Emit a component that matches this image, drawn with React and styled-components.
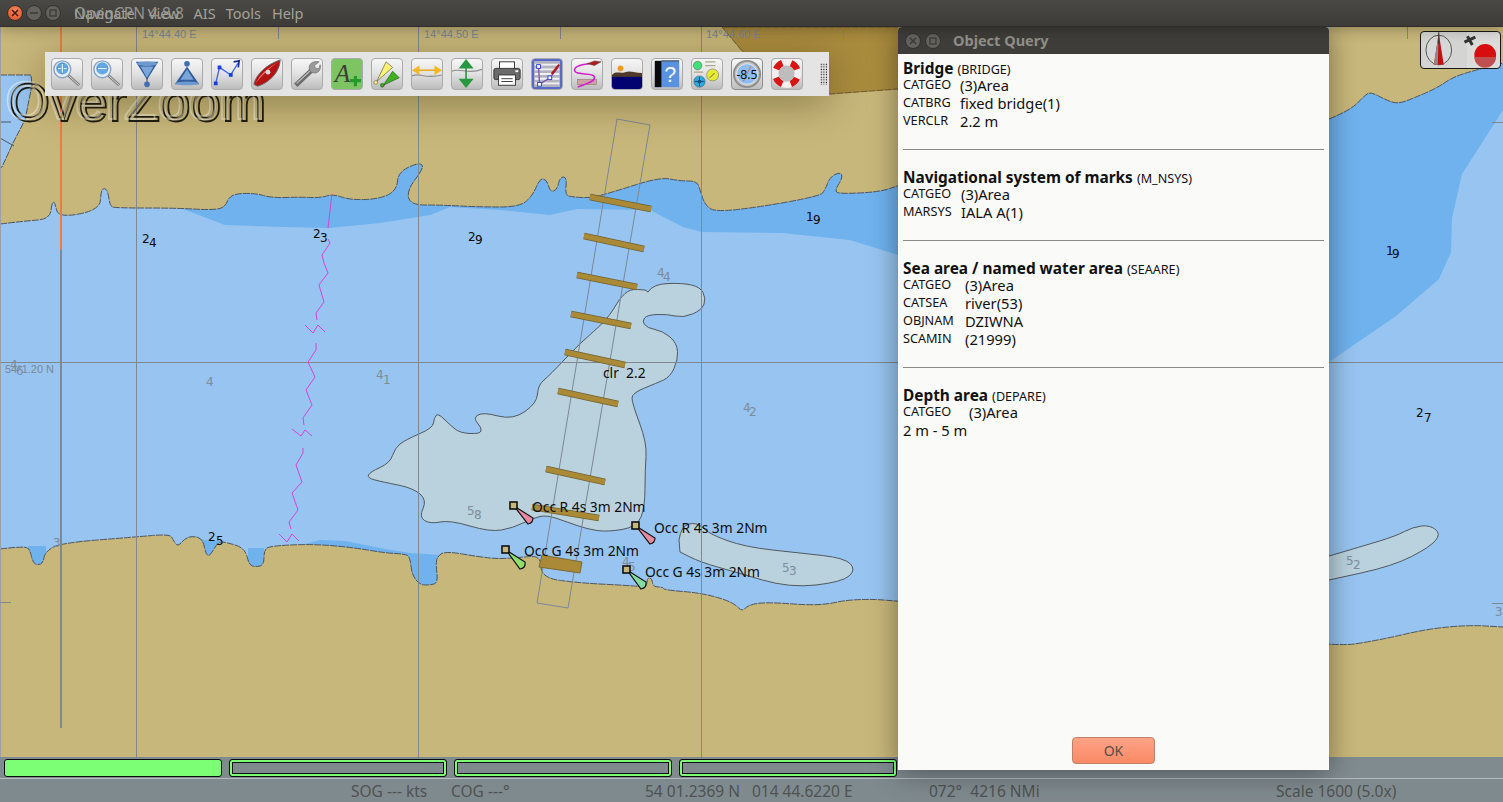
import React from "react";
import styled, { createGlobalStyle } from "styled-components";

const GlobalStyle = createGlobalStyle`
  html, body { margin: 0; padding: 0; background: #3c3b37; }
  body { font-family: "Noto Sans", "Open Sans", sans-serif; overflow: hidden; }
`;

const AppWindow = styled.div`
  position: relative;
  display: flex;
  flex-direction: column;
  width: 1503px;
  height: 802px;
  overflow: hidden;
`;

const TitleBar = styled.div`
  position: relative;
  display: flex;
  align-items: center;
  height: 27px;
  flex: none;
  padding-left: 7px;
  background: linear-gradient(#4b4945, #3c3b37);
  border-bottom: 1px solid #2f2e2b;
  box-sizing: border-box;
  box-shadow: 0 2px 14px rgba(0, 0, 0, 0.3);
  z-index: 3;
`;

const WinButtons = styled.div`
  display: flex;
  gap: 3px;
  margin-right: 13px;
`;

const WinButton = styled.div`
  display: flex;
  align-items: center;
  justify-content: center;
  width: ${(p) => p.$size || 16}px;
  height: ${(p) => p.$size || 16}px;
  border-radius: 50%;
  background: ${(p) => (p.$close ? "radial-gradient(circle at 50% 35%, #f58a5f, #e0491f)" : "#63625d")};
  border: 1px solid #33322e;
  box-sizing: border-box;
  color: ${(p) => (p.$close ? "#4a1c0c" : "#3d3c38")};
`;

const TitleMenus = styled.div`
  position: relative;
  display: flex;
  align-items: center;
  font-size: 14.5px;
  color: #a3a29b;
`;

const MenuItem = styled.span`
  margin-right: ${(p) => p.$gap || 10}px;
`;

const WindowTitle = styled.span`
  position: absolute;
  left: 0;
  top: 0;
  font-size: 15.5px;
  line-height: 20px;
  color: #a3a29b;
  opacity: 0.85;
  white-space: nowrap;
`;

const ChartArea = styled.div`
  position: relative;
  flex: 1;
  min-height: 0;
  background: #97c4f0;
`;

const ChartSvg = styled.svg`
  display: block;
  width: 100%;
  height: 100%;
`;

const Sounding = styled.text`
  font-family: "DejaVu Sans", sans-serif;
  font-size: 12px;
  fill: ${(p) => (p.$dim ? "#7e8b9c" : "#0a0a0a")};
`;

const GridLabel = styled.text`
  font-family: "Liberation Sans", sans-serif;
  font-size: 11px;
  fill: #7d8896;
`;

const LightLabel = styled.text`
  font-family: "Noto Sans", sans-serif;
  font-size: 13.8px;
  fill: #0d0d0d;
`;

const WaterMark = styled.text`
  font-family: "Liberation Sans", sans-serif;
  font-size: 53px;
  letter-spacing: 1px;
  fill: none;
  stroke: ${(p) => p.$color};
  stroke-width: ${(p) => p.$width};
`;

const Toolbar = styled.div`
  position: absolute;
  left: 45px;
  top: 25px;
  display: flex;
  align-items: center;
  gap: 8px;
  height: 44px;
  padding: 0 2px 0 6px;
  background: #e4e4e4;
  box-shadow: 0 8px 38px rgba(40, 30, 0, 0.36);
`;

const ToolButton = styled.div`
  width: 32px;
  height: 32px;
  flex: none;
  box-sizing: border-box;
  border: 1.5px solid ${(p) => (p.$dark ? "#8e8e8e" : "#aaa")};
  border-radius: 4px;
  overflow: hidden;
  background: ${(p) => (p.$active ? "#7cc562" : "linear-gradient(#f6f6f6 0%, #e4e4e4 45%, #bdbdbd 100%)")};

  svg {
    display: block;
    width: 100%;
    height: 100%;
  }
`;

const Grip = styled.div`
  width: 7px;
  height: 22px;
  margin-left: 9px;
  background-image: radial-gradient(#111 0.7px, transparent 0.9px);
  background-size: 2.6px 2.6px;
`;

const CompassBox = styled.div`
  position: absolute;
  left: 1420px;
  top: 4px;
  display: flex;
  width: 81px;
  height: 38px;
  box-sizing: border-box;
  border: 1.5px solid #1a1a1a;
  border-radius: 4px;
  background: linear-gradient(90deg, #d4d4d2 0 58%, #dcdcda 58%);
  overflow: hidden;

  svg {
    width: 100%;
    height: 100%;
  }
`;

const ChartBar = styled.div`
  display: flex;
  flex: none;
  gap: 7px;
  height: 22px;
  box-sizing: border-box;
  padding: 2px 0 0 4px;
  background: #808b90;
  border-bottom: 1px solid #b6bcbe;
`;

const ChartSlot = styled.div`
  width: 218px;
  height: 18px;
  box-sizing: border-box;
  border: 1px solid #0c0c0c;
  border-radius: 3px;
  background: ${(p) => (p.$on ? "#7dff75" : "#808b90")};
  box-shadow: ${(p) => (p.$on ? "none" : "inset 0 0 0 2px #7dff75, inset 0 0 0 3px #101010")};
`;

const StatusBar = styled.div`
  display: grid;
  grid-template-columns: 100px 194px 284px 347px 1fr;
  align-items: center;
  flex: none;
  height: 23px;
  padding-left: 351px;
  background: #7f8a8e;
  color: #4f5252;
  font-size: 15.5px;
`;

const StatusField = styled.div`
  white-space: pre;
`;

const PosFields = styled.div`
  display: flex;
  gap: 12px;
`;

const QueryDialog = styled.div`
  position: absolute;
  left: 898px;
  top: 27px;
  display: flex;
  flex-direction: column;
  width: 431px;
  height: 743px;
  border-radius: 4px 4px 0 0;
  overflow: hidden;
  background: #fafaf8;
  z-index: 2;
`;

const DialogShadow = styled.div`
  position: absolute;
  left: 898px;
  top: 27px;
  width: 431px;
  height: 743px;
  box-shadow: 0 2px 26px rgba(0, 0, 0, 0.42);
  z-index: 1;
`;

const DialogTitle = styled.div`
  display: flex;
  align-items: center;
  flex: none;
  gap: 4px;
  height: 27px;
  padding-left: 7px;
  background: #3f3d39;
`;

const DialogTitleText = styled.span`
  margin-left: 8px;
  margin-top: -2px;
  font-size: 14.5px;
  font-weight: 700;
  color: #8f8e87;
`;

const DialogBody = styled.div`
  flex: 1;
  display: flex;
  flex-direction: column;
  padding: 5px 5px 6px;
  color: #111;
`;

const SectionHead = styled.div`
  height: 18px;
  line-height: 20px;
  font-size: 15.4px;
  font-weight: 700;
  white-space: nowrap;
`;

const SectionCode = styled.span`
  font-size: 12.6px;
  font-weight: 400;
`;

const AttrRow = styled.div`
  display: grid;
  grid-template-columns: ${(p) => p.$key}px 1fr;
  height: 18px;
  line-height: 16px;
  font-size: 14.7px;
`;

const AttrKey = styled.span`
  font-size: 12.7px;
  line-height: 14px;
`;

const Divider = styled.div`
  height: 1px;
  margin: 18px 0;
  background: #8a8a88;
`;

const DialogFooter = styled.div`
  margin-top: auto;
  display: flex;
  justify-content: center;
`;

const OkButton = styled.button`
  width: 83px;
  height: 27px;
  padding: 0;
  border: 1px solid #c27f69;
  border-radius: 4px;
  background: linear-gradient(#fea386, #f98a66);
  color: #53504e;
  font-family: inherit;
  font-size: 14px;
`;

const smooth = (pts, close) => {
  const mid = (a, b) => [(a[0] + b[0]) / 2, (a[1] + b[1]) / 2];
  let d = `M${pts[0][0]} ${pts[0][1]}`;
  for (let i = 1; i < pts.length - 1; i++) {
    const m = mid(pts[i], pts[i + 1]);
    d += ` Q${pts[i][0]} ${pts[i][1]} ${m[0]} ${m[1]}`;
  }
  const last = pts[pts.length - 1];
  d += ` L${last[0]} ${last[1]}`;
  return close ? d + " Z" : d;
};

const line = (pts) => pts.map((p) => p.join(",")).join(" ");

const topCoastLeft = [[0, 224], [25, 221], [50, 219], [52, 202], [55, 202], [58, 218], [100, 210], [101, 190], [105, 188], [108, 192], [110, 206], [115, 208], [175, 208], [210, 210], [225, 208], [230, 194], [255, 193], [272, 198], [300, 197], [320, 198], [333, 194], [350, 200], [380, 199], [397, 190], [398, 172], [420, 162], [424, 168], [407, 190], [410, 205], [440, 205], [480, 207], [520, 207], [533, 195], [540, 178], [547, 180], [550, 192], [557, 190], [560, 177], [567, 177], [565, 195], [572, 197], [590, 198], [610, 193], [660, 177], [680, 181], [697, 181], [700, 190], [705, 205], [715, 212], [760, 207], [820, 196], [825, 190], [830, 177], [840, 172], [843, 177], [835, 190], [838, 194], [880, 192], [900, 185]];
const topCoastRight = [[1329, 119], [1351, 110], [1365, 95], [1371, 92], [1386, 100], [1398, 104], [1414, 98], [1437, 88], [1453, 77], [1476, 70], [1503, 63]];
const bottomCoast = [[0, 549], [25, 546], [30, 550], [33, 563], [38, 565], [43, 563], [45, 552], [60, 543], [135, 537], [170, 534], [173, 540], [178, 547], [185, 538], [195, 536], [203, 540], [206, 555], [210, 556], [218, 542], [225, 542], [245, 548], [249, 565], [256, 567], [264, 565], [264, 550], [270, 546], [310, 544], [350, 547], [385, 553], [405, 554], [410, 557], [412, 575], [420, 585], [430, 585], [438, 583], [436, 565], [437, 557], [445, 551], [480, 557], [500, 559], [523, 557], [541, 556], [541, 578], [580, 583], [620, 585], [647, 587], [647, 578], [652, 578], [653, 587], [663, 587], [664, 590], [702, 593], [733, 602], [742, 612], [748, 605], [767, 602], [820, 606], [850, 599], [898, 600], [1329, 648], [1380, 640], [1427, 629], [1469, 625], [1503, 627]];
const mediumBand = [[183, 209], [225, 225], [285, 227], [329, 228], [380, 223], [430, 215], [450, 207], [500, 210], [550, 215], [577, 209], [650, 210], [683, 227], [702, 232], [783, 233], [850, 240], [898, 255], [1329, 362], [1396, 316], [1439, 279], [1451, 252], [1452, 218], [1462, 174], [1503, 110], [1503, 27], [183, 27]];
const darkLand = [[722, 27], [743, 52], [830, 94], [898, 89], [910, 27]];
const bigIsland = [[648, 292], [653, 284], [683, 283], [700, 287], [706, 298], [702, 310], [683, 318], [667, 314], [647, 315], [642, 321], [647, 328], [663, 331], [677, 343], [678, 360], [670, 377], [657, 383], [632, 393], [632, 403], [647, 443], [645, 470], [645, 507], [637, 527], [607, 532], [587, 529], [567, 522], [547, 515], [533, 518], [513, 528], [490, 532], [450, 520], [430, 524], [419, 517], [427, 500], [413, 488], [383, 482], [367, 478], [370, 472], [390, 463], [395, 448], [405, 440], [433, 428], [434, 418], [438, 413], [450, 425], [460, 433], [480, 434], [482, 428], [473, 418], [483, 412], [513, 420], [537, 403], [538, 385], [550, 375], [580, 343], [607, 320], [620, 298], [630, 289], [645, 290]];
const midIsland = [[679, 540], [681, 526], [697, 522], [709, 534], [745, 547], [800, 553], [845, 558], [856, 570], [842, 582], [790, 588], [735, 572], [700, 562], [680, 552]];
const rightIsland = [[1329, 556], [1363, 546], [1396, 536], [1413, 527], [1430, 525], [1441, 534], [1430, 547], [1393, 566], [1329, 580]];
const bridgeBars = [[590, 197, 651, 209], [584, 236, 644, 249], [577, 275, 637, 287], [571, 314, 631, 326], [565, 352, 625, 365], [558, 391, 618, 404], [546, 469, 605, 482], [532, 507, 599, 518]];
const cableA = [[328, 239], [330, 243], [322, 255], [324, 263], [328, 273], [319, 285], [324, 302], [316, 313], [317, 320]];
const cableB = [[316, 343], [316, 350], [308, 362], [315, 377], [306, 390], [312, 405], [303, 418], [304, 425]];
const cableC = [[303, 448], [303, 453], [296, 465], [302, 482], [292, 493], [298, 510], [289, 522], [291, 529]];
const chevrons = [[[305, 325], [313, 333], [318, 325], [325, 332]], [[292, 429], [301, 436], [305, 430], [312, 436]], [[279, 534], [287, 542], [292, 534], [299, 541]]];
const soundings = [
  ["2", 142, 243], ["4", 149, 247], ["2", 313, 238], ["3", 320, 242], ["2", 468, 241], ["9", 475, 244],
  ["1", 806, 221], ["9", 813, 224], ["1", 1386, 255], ["9", 1392, 258], ["2", 1416, 417], ["7", 1424, 422],
  ["2", 208, 541], ["5", 216, 545],
];
const dimSoundings = [
  ["4", 206, 386], ["4", 376, 379], ["1", 383, 384], ["4", 743, 412], ["2", 749, 416], ["4", 657, 277], ["4", 663, 281],
  ["5", 467, 515], ["8", 474, 519], ["5", 782, 572], ["3", 789, 575], ["5", 1346, 565], ["2", 1353, 569],
  ["3", 1495, 616], ["3", 53, 547], ["4", 622, 566], ["5", 628, 571], ["4", 10, 369], ["6", 16, 375],
];
const lights = [
  { x: 513, y: 505, fill: "#e58aa0", d: "M1 1 L20 13 Q20 18 15 19 Z", label: "Occ R 4s 3m 2Nm", lx: 532, ly: 512 },
  { x: 635, y: 525, fill: "#e58aa0", d: "M1 1 L20 13 Q20 18 15 19 Z", label: "Occ R 4s 3m 2Nm", lx: 654, ly: 533 },
  { x: 505, y: 549, fill: "#8fdf70", d: "M1 1 L20 13 Q21 19 15 20 Z", label: "Occ G 4s 3m 2Nm", lx: 524, ly: 556 },
  { x: 626, y: 569, fill: "#85dca0", d: "M1 1 L20 13 Q21 19 15 20 Z", label: "Occ G 4s 3m 2Nm", lx: 645, ly: 577 },
];

function ChartMap() {
  return (
    <ChartSvg viewBox="0 27 1503 730">
      <polygon points={line(mediumBand)} fill="#6fb2ee" />
      <polygon points="28,546 46,546 46,575 28,575" fill="#6fb2ee" />
      <polygon points="175,546 190,536 205,540 220,541 218,562 200,562" fill="#6fb2ee" />
      <polygon points="248,548 264,548 264,572 248,572" fill="#6fb2ee" />
      <polygon points="305,544 320,540 345,541 385,549 410,553 440,555 440,592 410,592 400,560 305,550" fill="#6fb2ee" />

      <path d={`${smooth(topCoastLeft)} L900 27 L0 27 Z`} fill="#c8b77a" />
      <path d={`${smooth(topCoastRight)} L1503 27 L1329 27 Z`} fill="#c8b77a" />
      <polygon points={line(darkLand)} fill="#aa8c3e" stroke="#6d5a28" strokeDasharray="7 1" />
      <path d={smooth(topCoastLeft)} fill="none" stroke="#4e5560" strokeWidth="1" strokeDasharray="7 1" />
      <path d={smooth(topCoastRight)} fill="none" stroke="#4e5560" strokeWidth="1" strokeDasharray="7 1" />

      <path d={`${smooth(bottomCoast)} L1503 757 L0 757 Z`} fill="#c8b77a" />
      <path d={smooth(bottomCoast)} fill="none" stroke="#4e5560" strokeWidth="1" strokeDasharray="7 1" />

      <polygon points="0,75 31,75 32,85 25,120 13,143 2,167 0,168" fill="#97c4f0" stroke="#4e5560" strokeDasharray="7 1" />
      <path d="M0 138 L14 146 M0 122 L11 122" stroke="#4e5560" />

      <path d={smooth(bigIsland, true)} fill="#b9d2de" stroke="#52585e" />
      <path d={smooth(midIsland, true)} fill="#b9d2de" stroke="#52585e" />
      <path d={smooth(rightIsland)} fill="#b9d2de" stroke="#52585e" />

      {[136, 418, 701].map((x) => (
        <line key={x} x1={x + 0.5} y1="27" x2={x + 0.5} y2="757" stroke="#808890" />
      ))}
      {[278, 560, 843, 1407].map((x) => (
        <line key={x} x1={x + 0.5} y1="27" x2={x + 0.5} y2="39" stroke="#808890" />
      ))}
      <line x1="0" y1="362.5" x2="1503" y2="362.5" stroke="#808890" />
      <line x1="0.5" y1="27" x2="0.5" y2="757" stroke="#9aa0a6" />
      <line x1="61" y1="250" x2="61" y2="728" stroke="#808890" strokeWidth="2" />
      <line x1="61" y1="27" x2="61" y2="250" stroke="#ec7d3f" strokeWidth="2" />
      <path d="M0 602.5 H11 M1492 122.5 H1503 M1492 603.5 H1503" stroke="#808890" />

      <GridLabel x="142" y="38">14°44.40 E</GridLabel>
      <GridLabel x="424" y="38">14°44.50 E</GridLabel>
      <GridLabel x="706" y="38">14°44.60 E</GridLabel>
      <GridLabel x="5" y="373">54°1.20 N</GridLabel>

      <polygon points="617,119 650,125 568,608 537,603" fill="none" stroke="#7c8896" />
      {bridgeBars.map((b) => (
        <g key={b[0]}>
          <line x1={b[0]} y1={b[1]} x2={b[2]} y2={b[3]} stroke="#6f6032" strokeWidth="6.4" />
          <line x1={b[0]} y1={b[1]} x2={b[2]} y2={b[3]} stroke="#ab8a37" strokeWidth="5" />
        </g>
      ))}
      <polygon points="542,555 582,562 580,573 539,567" fill="#ab8a37" stroke="#7d6a33" />

      <line x1="332" y1="194" x2="328" y2="228" stroke="#d545d8" />
      {[cableA, cableB, cableC, ...chevrons].map((c, i) => (
        <polyline key={i} points={line(c)} fill="none" stroke="#d545d8" />
      ))}

      {soundings.map(([t, x, y]) => (
        <Sounding key={`${x}-${y}`} x={x} y={y}>{t}</Sounding>
      ))}
      {dimSoundings.map(([t, x, y]) => (
        <Sounding key={`${x}-${y}`} x={x} y={y} $dim>{t}</Sounding>
      ))}

      <LightLabel x="603" y="378">clr{"\u00a0\u00a0"}2.2</LightLabel>
      {lights.map((l) => (
        <g key={l.label + l.x}>
          <path d={l.d} transform={`translate(${l.x} ${l.y})`} fill={l.fill} stroke="#111" strokeWidth="1.2" />
          <rect x={l.x - 3} y={l.y - 3} width="7" height="7" fill="#c8b77a" stroke="#111" strokeWidth="1.6" />
          <LightLabel x={l.lx} y={l.ly}>{l.label}</LightLabel>
        </g>
      ))}

      <WaterMark x="9" y="121" $color="#1f1d12" $width="1.8">OverZoom</WaterMark>
      <WaterMark x="5" y="119" $color="rgba(255,255,255,0.45)" $width="1.6">OverZoom</WaterMark>
    </ChartSvg>
  );
}

const Lens = ({ plus }) => (
  <svg viewBox="0 0 32 32">
    <line x1="17" y1="17" x2="29" y2="28" stroke="#777" strokeWidth="3" />
    <line x1="17" y1="17" x2="29" y2="28" stroke="#eee" strokeWidth="1" />
    <circle cx="11" cy="11" r="9" fill="#e9eef6" stroke="#8aa3c6" strokeWidth="1.5" />
    <circle cx="11" cy="10" r="6.5" fill="#62a8e6" />
    <rect x="6" y="9" width="10" height="2.4" fill="#dff0ff" stroke="#2a6ab0" strokeWidth=".5" />
    {plus && <rect x="9.8" y="5" width="2.4" height="10" fill="#dff0ff" stroke="#2a6ab0" strokeWidth=".5" />}
  </svg>
);

const icons = [
  <Lens plus />,
  <Lens />,
  <svg viewBox="0 0 32 32">
    <polygon points="4,3 28,3 16,22" fill="#2f5d9e" />
    <polygon points="9,8 23,8 16,20" fill="#7ba6d8" />
    <ellipse cx="16" cy="5" rx="11" ry="2.4" fill="#6f9ad0" />
    <line x1="16" y1="20" x2="16" y2="26" stroke="#345" />
    <circle cx="16" cy="27" r="3" fill="#3f6fb0" />
  </svg>,
  <svg viewBox="0 0 32 32">
    <circle cx="16" cy="5" r="3" fill="#3f6fb0" />
    <polygon points="3,27 29,27 16,8" fill="#2f5d9e" />
    <polygon points="9,22 23,22 16,11" fill="#7ba6d8" />
    <ellipse cx="16" cy="26" rx="12" ry="2" fill="#6f9ad0" />
  </svg>,
  <svg viewBox="0 0 32 32">
    <polyline points="4,26 8,9 20,17 28,4" fill="none" stroke="#3a62f2" strokeWidth="1.4" />
    <path d="M23 3 L29 2 L28 9" fill="none" stroke="#12308e" strokeWidth="1.8" />
    <rect x="2" y="24" width="4" height="4" fill="#1440e0" />
    <rect x="6" y="7" width="4" height="4" fill="#1440e0" />
    <rect x="18" y="15" width="4" height="4" fill="#1440e0" />
  </svg>,
  <svg viewBox="0 0 32 32">
    <path d="M2 27 C4 17 15 6 30 1 C30 13 19 25 6 29 Z" fill="#b41212" stroke="#666" />
    <path d="M4 26 C8 17 18 8 29 3 C20 8 10 18 4 26 Z" fill="#e87070" />
    <circle cx="17" cy="14" r="2.6" fill="#d8d8d8" />
  </svg>,
  <svg viewBox="0 0 32 32">
    <line x1="4" y1="28" x2="21" y2="12" stroke="#6a6a6a" strokeWidth="5" />
    <line x1="5" y1="26" x2="20" y2="12" stroke="#c0c0c0" strokeWidth="1.4" />
    <path d="M19 13 C16 6 22 1 29 3 L24 7 L25 10 L29 10 L30 6 C32 13 25 18 19 13 Z" fill="#9a9a9a" stroke="#666" strokeWidth=".6" />
  </svg>,
  <svg viewBox="0 0 32 32">
    <text x="3" y="24" fontFamily="Liberation Serif, serif" fontStyle="italic" fontSize="27" fill="#3a3f38">A</text>
    <path d="M19 23 H31 M25 18 V29" stroke="#239b2c" strokeWidth="3.4" />
  </svg>,
  <svg viewBox="0 0 32 32">
    <polygon points="5,24 15,3 22,9" fill="#fbf272" stroke="#555" strokeWidth=".7" />
    <circle cx="4" cy="25" r="2" fill="#fbf272" stroke="#555" strokeWidth=".6" />
    <polygon points="12,28 22,13 29,20" fill="#3fb020" stroke="#2a5a20" strokeWidth=".7" />
    <circle cx="11" cy="28" r="2" fill="#3fb020" stroke="#333" strokeWidth=".6" />
  </svg>,
  <svg viewBox="0 0 32 32">
    <path d="M0 18 C8 14 14 22 32 17" fill="none" stroke="#8d8d8d" strokeWidth="1.2" />
    <line x1="6" y1="12" x2="26" y2="12" stroke="#e4a818" strokeWidth="1.6" />
    <polygon points="0,12 8,7 8,17" fill="#f5b722" />
    <polygon points="32,12 24,7 24,17" fill="#f5b722" />
  </svg>,
  <svg viewBox="0 0 32 32">
    <path d="M0 13 C8 9 18 17 32 11" fill="none" stroke="#8d8d8d" strokeWidth="1.2" />
    <line x1="15" y1="7" x2="15" y2="25" stroke="#1e8c3a" strokeWidth="1.6" />
    <polygon points="15,0 7,10 23,10" fill="#27983f" />
    <polygon points="15,31 7,21 23,21" fill="#27983f" />
  </svg>,
  <svg viewBox="0 0 32 32">
    <rect x="8" y="3" width="16" height="10" fill="#fff" stroke="#333" />
    <rect x="2" y="10" width="28" height="12" rx="2" fill="#6a6a6a" stroke="#333" />
    <rect x="25" y="12" width="3" height="2" fill="#fff" />
    <rect x="7" y="17" width="18" height="11" fill="#fff" stroke="#333" />
    <path d="M10 21 H22 M10 24 H22" stroke="#333" />
  </svg>,
  <svg viewBox="0 0 32 32">
    <rect x="1" y="1" width="30" height="30" fill="#b4b4c0" stroke="#5a6ac8" strokeWidth="2.4" />
    <path d="M3 6 H29 M3 11 H29 M3 16 H29 M3 21 H29 M3 26 H29" stroke="#f2f2f4" strokeWidth="2" />
    <polyline points="7,8 8,27 19,20 28,9" fill="none" stroke="#7a4fb0" strokeWidth="1.4" />
    <rect x="5" y="6" width="4" height="4" fill="#fff" stroke="#2a3fd0" />
    <rect x="6" y="25" width="4" height="4" fill="#fff" stroke="#2a3fd0" />
    <rect x="17" y="18" width="4" height="4" fill="#fff" stroke="#2a3fd0" />
    <line x1="21" y1="16" x2="29" y2="6" stroke="#b51a1a" strokeWidth="2.4" />
  </svg>,
  <svg viewBox="0 0 32 32">
    <rect x="6" y="22" width="20" height="5" fill="#cfa3a3" stroke="#8d6c6c" strokeWidth=".6" />
    <path d="M18 5 C8 6 1 9 3 13 C6 18 22 14 24 19 C25 25 12 27 6 30" fill="none" stroke="#d21fd2" strokeWidth="1.7" />
    <path d="M16 5 L24 2 L31 3 L24 7 Z" fill="#b01a1a" stroke="#444" strokeWidth=".5" />
  </svg>,
  <svg viewBox="0 0 32 32">
    <circle cx="9" cy="10" r="3" fill="#f09a20" />
    <path d="M0 17 C4 12 8 16 14 14 C20 12 24 15 32 15 V24 H0 Z" fill="#4f3a2a" />
    <rect x="0" y="19" width="32" height="13" fill="#020270" />
  </svg>,
  <svg viewBox="0 0 32 32">
    <rect x="3" y="2" width="26" height="28" fill="#5b92e0" />
    <rect x="3" y="2" width="7" height="28" fill="#0b0b0b" />
    <path d="M10 2 H29" stroke="#233" strokeWidth="1" />
    <text x="13" y="25" fontFamily="Liberation Sans, sans-serif" fontSize="23" fill="#f2f6ff">?</text>
  </svg>,
  <svg viewBox="0 0 32 32">
    <circle cx="6" cy="7" r="4.6" fill="#3fe07a" stroke="#555" strokeWidth=".5" />
    <path d="M14 3 H25 M14 7 H25 M2 14 H12" stroke="#aaa88a" strokeWidth="1.3" />
    <circle cx="22" cy="17" r="6.4" fill="#e4ea36" stroke="#555" strokeWidth=".5" />
    <line x1="19" y1="20" x2="24" y2="15" stroke="#555" />
    <circle cx="8" cy="24" r="6" fill="#2ba8e0" stroke="#345" strokeWidth=".5" />
    <path d="M8 19 V29 M3 24 H13" stroke="#16507a" />
    <circle cx="8" cy="24" r="2" fill="#16507a" />
  </svg>,
  <svg viewBox="0 0 32 32">
    <circle cx="16" cy="16" r="14" fill="#c4c4c4" stroke="#8e8e8e" strokeWidth="2" />
    <circle cx="16" cy="16" r="11" fill="#8dbdf4" stroke="#e6e6e6" />
    <line x1="12" y1="24" x2="20" y2="8" stroke="#d9683a" />
    <text x="16" y="21" textAnchor="middle" fontFamily="Noto Sans, sans-serif" fontSize="13" fill="#0c0c0c">-8.5</text>
  </svg>,
  <svg viewBox="0 0 32 32">
    <circle cx="15.5" cy="15.5" r="12" fill="none" stroke="#f3efef" strokeWidth="7" />
    <circle cx="15.5" cy="15.5" r="12" fill="none" stroke="#d81414" strokeWidth="7" strokeDasharray="9.4 9.4" strokeDashoffset="4.7" transform="rotate(45 15.5 15.5)" />
    <circle cx="15.5" cy="15.5" r="8.5" fill="#bdbdbd" />
  </svg>,
];

const CrossIcon = () => (
  <svg width="8" height="8" viewBox="0 0 8 8"><path d="M1 1 L7 7 M7 1 L1 7" stroke="currentColor" strokeWidth="1.6" /></svg>
);
const MinIcon = () => (
  <svg width="8" height="8" viewBox="0 0 8 8"><path d="M0 4 H8" stroke="currentColor" strokeWidth="1.6" /></svg>
);
const BoxIcon = () => (
  <svg width="8" height="8" viewBox="0 0 8 8"><rect x="1" y="1" width="6" height="6" fill="none" stroke="currentColor" strokeWidth="1.3" /></svg>
);

const sections = [
  {
    name: "Bridge", code: "BRIDGE", keyWidth: 57,
    rows: [["CATGEO", "(3)Area"], ["CATBRG", "fixed bridge(1)"], ["VERCLR", "2.2 m"]],
  },
  {
    name: "Navigational system of marks", code: "M_NSYS", keyWidth: 58,
    rows: [["CATGEO", "(3)Area"], ["MARSYS", "IALA A(1)"]],
  },
  {
    name: "Sea area / named water area", code: "SEAARE", keyWidth: 62,
    rows: [["CATGEO", "(3)Area"], ["CATSEA", "river(53)"], ["OBJNAM", "DZIWNA"], ["SCAMIN", "(21999)"]],
  },
  {
    name: "Depth area", code: "DEPARE", keyWidth: 66,
    rows: [["CATGEO", "(3)Area"]],
    note: "2 m - 5 m",
  },
];

function ObjectQuery() {
  return (
    <QueryDialog>
      <DialogTitle>
        <WinButton $size={16}><CrossIcon /></WinButton>
        <WinButton $size={16}><BoxIcon /></WinButton>
        <DialogTitleText>Object Query</DialogTitleText>
      </DialogTitle>
      <DialogBody>
        {sections.map((s, i) => (
          <div key={s.code}>
            <SectionHead>{s.name} <SectionCode>({s.code})</SectionCode></SectionHead>
            {s.rows.map(([k, v]) => (
              <AttrRow key={k} $key={s.keyWidth}>
                <AttrKey>{k}</AttrKey>
                <span>{v}</span>
              </AttrRow>
            ))}
            {s.note && <AttrRow $key={0}><span />{s.note}</AttrRow>}
            {i < sections.length - 1 && <Divider />}
          </div>
        ))}
        <DialogFooter>
          <OkButton>OK</OkButton>
        </DialogFooter>
      </DialogBody>
    </QueryDialog>
  );
}

export default function App() {
  return (
    <>
      <GlobalStyle />
      <AppWindow>
        <TitleBar>
          <WinButtons>
            <WinButton $close><CrossIcon /></WinButton>
            <WinButton><MinIcon /></WinButton>
            <WinButton><BoxIcon /></WinButton>
          </WinButtons>
          <TitleMenus>
            <WindowTitle>OpenCPN 4.8.8</WindowTitle>
            <MenuItem $gap={13}>Navigate</MenuItem>
            <MenuItem $gap={14}>View</MenuItem>
            <MenuItem>AIS</MenuItem>
            <MenuItem $gap={11}>Tools</MenuItem>
            <MenuItem>Help</MenuItem>
          </TitleMenus>
        </TitleBar>
        <ChartArea>
          <ChartMap />
          <Toolbar>
            {icons.map((icon, i) => (
              <ToolButton key={i} $active={i === 7} $dark={i === 17}>{icon}</ToolButton>
            ))}
            <Grip />
          </Toolbar>
          <CompassBox>
            <svg viewBox="0 0 80 36">
              <ellipse cx="18" cy="18" rx="13" ry="15" fill="#d8d8d8" stroke="#555" />
              <polygon points="18,1 13,33 23,33" fill="#c01010" />
              <polygon points="18,1 13,33 17,33" fill="#8a8a8a" />
              <line x1="18" y1="0" x2="18" y2="12" stroke="#333" />
              <path d="M44 10 L55 5 M47 4 L52 13" stroke="#333" strokeWidth="3" />
              <circle cx="65" cy="23" r="11" fill="#d80e0e" />
              <path d="M54 25 A11 11 0 0 0 76 25 Z" fill="#c05050" />
            </svg>
          </CompassBox>
        </ChartArea>
        <ChartBar>
          <ChartSlot $on />
          <ChartSlot />
          <ChartSlot />
          <ChartSlot />
        </ChartBar>
        <StatusBar>
          <StatusField>SOG --- kts</StatusField>
          <StatusField>COG ---°</StatusField>
          <PosFields>
            <StatusField>54 01.2369 N</StatusField>
            <StatusField>014 44.6220 E</StatusField>
          </PosFields>
          <StatusField>072°  4216 NMi</StatusField>
          <StatusField>Scale 1600 (5.0x)</StatusField>
        </StatusBar>
        <DialogShadow />
        <ObjectQuery />
      </AppWindow>
    </>
  );
}
